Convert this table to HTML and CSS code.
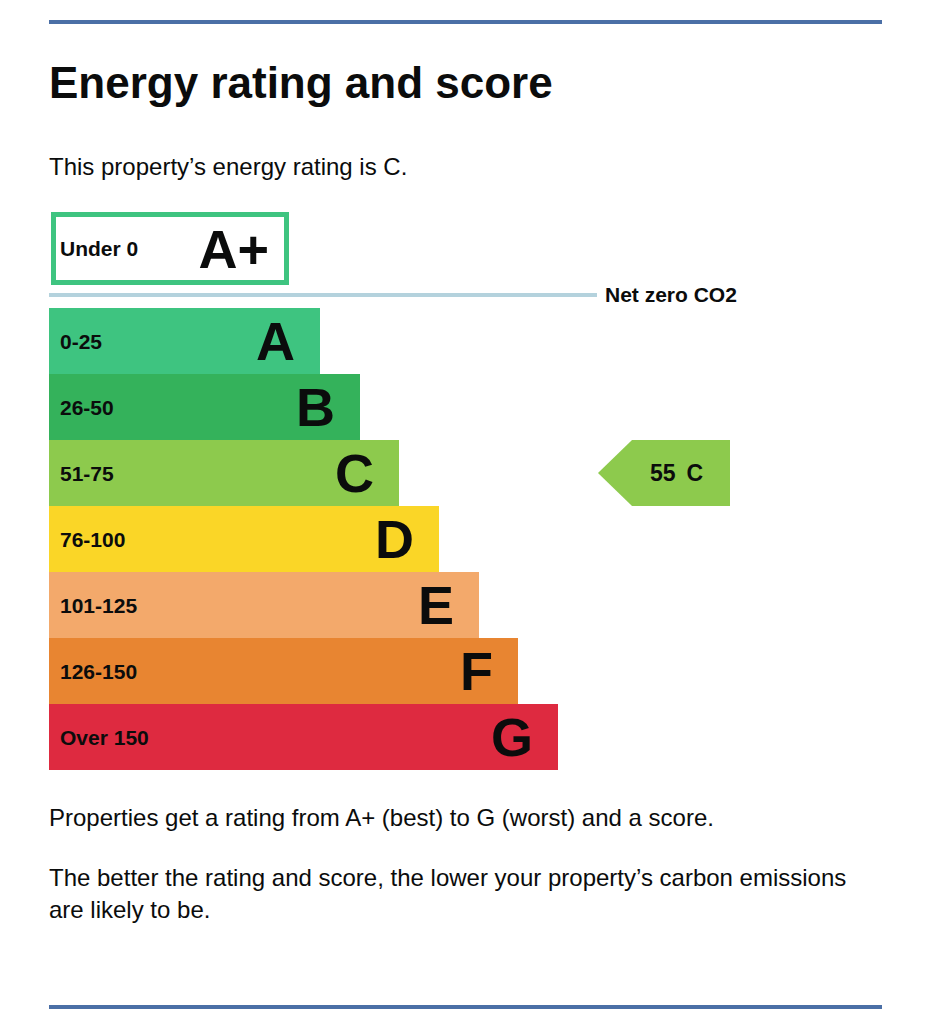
FILE: index.html
```html
<!DOCTYPE html>
<html lang="en">
<head>
<meta charset="utf-8">
<title>Energy rating and score</title>
<link rel="stylesheet" href="styles.css">
</head>
<body>
<div class="page">
  <hr class="rule rule-top">
  <h2 class="heading">Energy rating and score</h2>
  <p class="body">This property’s energy rating is C.</p>

  <div class="chart">
    <div class="row row-plus">
      <div class="band band-plus"><span class="range">Under 0</span><span class="letter">A+</span></div>
    </div>
    <div class="net">
      <div class="net-line"></div>
      <span class="net-label">Net zero CO2</span>
    </div>
    <div class="row"><div class="band band-a"><span class="range">0-25</span><span class="letter">A</span></div></div>
    <div class="row"><div class="band band-b"><span class="range">26-50</span><span class="letter">B</span></div></div>
    <div class="row">
      <div class="band band-c"><span class="range">51-75</span><span class="letter">C</span></div>
      <div class="pointer"><span>55</span><span>C</span></div>
    </div>
    <div class="row"><div class="band band-d"><span class="range">76-100</span><span class="letter">D</span></div></div>
    <div class="row"><div class="band band-e"><span class="range">101-125</span><span class="letter">E</span></div></div>
    <div class="row"><div class="band band-f"><span class="range">126-150</span><span class="letter">F</span></div></div>
    <div class="row"><div class="band band-g"><span class="range">Over 150</span><span class="letter">G</span></div></div>
  </div>

  <p class="body body-first">Properties get a rating from A+ (best) to G (worst) and a score.</p>
  <p class="body body-next">The better the rating and score, the lower your property’s carbon emissions are likely to be.</p>
  <hr class="rule rule-bottom">
</div>
</body>
</html>
```

FILE: styles.css
```css
html, body {
  margin: 0;
  padding: 0;
  background: #ffffff;
}

.page {
  width: 833px;
  margin-left: 49px;
  padding-top: 20px;
  color: #0b0c0c;
  font-family: "Liberation Sans", Arial, sans-serif;
}

.rule {
  border: 0;
  margin: 0;
  height: 4px;
  background: #4b6fa6;
}

.heading {
  margin: 33px 0 0;
  font-size: 44px;
  line-height: 52px;
  font-weight: 700;
  letter-spacing: 0;
}

.body {
  margin: 42px 0 0;
  font-size: 24px;
  line-height: 32px;
}

.body-first {
  margin-top: 32px;
}

.body-next {
  margin-top: 28px;
}

.rule-bottom {
  margin-top: 79px;
}

.chart {
  margin-top: 29px;
  display: flex;
  flex-direction: column;
}

.row {
  display: grid;
  grid-template-columns: 549px 1fr;
  height: 66px;
  align-items: stretch;
}

.row-plus {
  height: 73px;
}

.band {
  display: flex;
  align-items: center;
  justify-content: space-between;
  box-sizing: border-box;
  padding: 0 25px 0 11px;
  font-weight: 700;
  color: #0b0c0c;
}

.range {
  font-size: 21px;
  line-height: 21px;
}

.letter {
  font-family: "Liberation Sans", Arial, sans-serif;
  font-size: 54px;
  line-height: 54px;
}

.band-plus {
  margin-left: 2px;
  width: 238px;
  border: 5px solid #3ec480;
  padding: 0 15px 0 4px;
  background: #ffffff;
}

.band-a { width: 271px; background: #3ec480; }
.band-b { width: 311px; background: #34b25b; }
.band-c { width: 350px; background: #8dca4d; }
.band-d { width: 390px; background: #fad627; }
.band-e { width: 430px; background: #f3a96b; }
.band-f { width: 469px; background: #e88531; }
.band-g { width: 509px; background: #de2a40; }

.net {
  display: grid;
  grid-template-columns: 548px 1fr;
  align-items: center;
  height: 20px;
  margin-bottom: 3px;
}

.net-line {
  height: 4px;
  background: #b4d2dd;
}

.net-label {
  padding-left: 8px;
  font-size: 21px;
  line-height: 20px;
  font-weight: 700;
  white-space: nowrap;
}

.pointer {
  width: 132px;
  display: flex;
  align-items: center;
  gap: 11px;
  box-sizing: border-box;
  padding-left: 52px;
  background: #8dca4d;
  clip-path: polygon(34px 0, 100% 0, 100% 100%, 34px 100%, 0 50%);
  font-size: 23px;
  font-weight: 700;
}
```
